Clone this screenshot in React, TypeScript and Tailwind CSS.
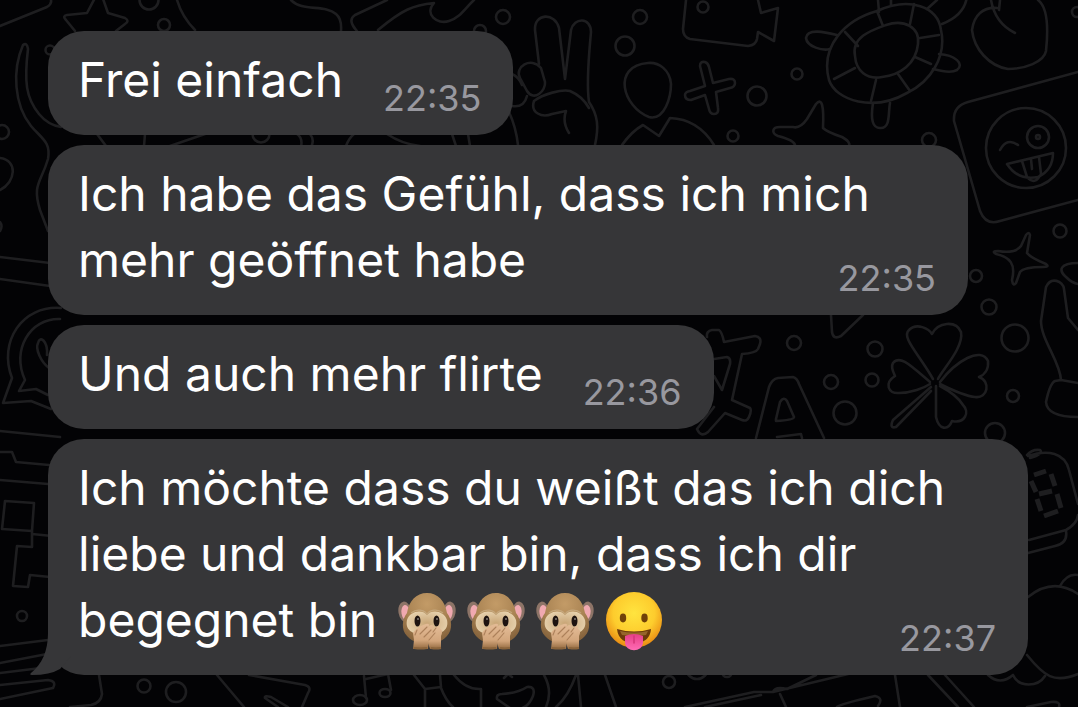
import type { ReactNode } from 'react';

type Message = {
  id: number;
  time: string;
  width: string;
  body: ReactNode;
  multiline?: boolean;
  tail?: boolean;
};

function EmojiGradients() {
  return (
    <svg aria-hidden="true" className="absolute h-0 w-0">
      <defs>
        <radialGradient id="fur" cx="50%" cy="22%" r="80%">
          <stop offset="0" stopColor="#c39b67" />
          <stop offset="0.55" stopColor="#a98353" />
          <stop offset="1" stopColor="#82603a" />
        </radialGradient>
        <radialGradient id="mask" cx="50%" cy="50%" r="60%">
          <stop offset="0" stopColor="#c9a677" />
          <stop offset="1" stopColor="#e9d5b2" />
        </radialGradient>
        <linearGradient id="hand" x1="0" y1="0" x2="0" y2="1">
          <stop offset="0" stopColor="#e3bb96" />
          <stop offset="0.65" stopColor="#d3a67c" />
          <stop offset="1" stopColor="#93693f" />
        </linearGradient>
        <radialGradient id="face" cx="50%" cy="38%" r="62%">
          <stop offset="0" stopColor="#ffe43f" />
          <stop offset="0.6" stopColor="#fdcc2d" />
          <stop offset="1" stopColor="#e98a12" />
        </radialGradient>
        <linearGradient id="tongue" x1="0" y1="0" x2="0" y2="1">
          <stop offset="0" stopColor="#e63f86" />
          <stop offset="1" stopColor="#ff6bb5" />
        </linearGradient>
      </defs>
    </svg>
  );
}

function MonkeyEmoji() {
  return (
    <svg role="img" aria-label="🙊" viewBox="0 0 58 60" className="h-[60px] w-[58px]">
      <ellipse cx="7" cy="21" rx="6.5" ry="10.5" fill="#8d7467" transform="rotate(-10 7 21)" />
      <ellipse cx="51" cy="21" rx="6.5" ry="10.5" fill="#8d7467" transform="rotate(10 51 21)" />
      <ellipse cx="8" cy="22" rx="4.5" ry="8" fill="#f0a9b0" transform="rotate(-10 8 22)" />
      <ellipse cx="50" cy="22" rx="4.5" ry="8" fill="#f0a9b0" transform="rotate(10 50 22)" />
      <path d="M29 2C18 2 11 10 9 22C4 28 3 39 9 45C15 52 22 52 29 52C36 52 43 52 49 45C55 39 54 28 49 22C47 10 40 2 29 2Z" fill="url(#fur)" />
      <path d="M29 24C24 18 12 20 9 29C7 38 13 44 29 44C45 44 51 38 49 29C46 20 34 18 29 24Z" fill="url(#mask)" />
      <path d="M13 22C19 17 26 19 29 23C32 19 39 17 45 22" fill="none" stroke="#cbb089" strokeWidth="1.2" opacity="0.7" />
      <ellipse cx="19.500" cy="30" rx="3" ry="5.6" fill="#1d1310" />
      <ellipse cx="38.500" cy="30" rx="3" ry="5.6" fill="#1d1310" />
      <circle cx="20" cy="28" r="0.9" fill="#8d8580" />
      <circle cx="39" cy="28" r="0.9" fill="#8d8580" />
      <path d="M43 58H32L29 49L33 40L38 36C41 34 43 36 42 38C44 38 45 41 43 45V50Z" fill="url(#hand)" />
      <path d="M15 58L16 49L15 42C17 38 24 34 28 33C31 32 32 34 30 36L33 34C37 34 36 37 34 39C38 37 39 40 37 42L31 49L30 58Z" fill="url(#hand)" />
      <path d="M29 36L22 43M33 39L26 46M19 39L17 44M37 42L31 49M38 37L35 41" stroke="#a27650" strokeWidth="1.1" strokeLinecap="round" opacity="0.8" />
      <path d="M16 57Q23 58 29 57M33 57Q38 58 43 57" fill="none" stroke="#8a643c" strokeWidth="2" />
    </svg>
  );
}

function TongueEmoji() {
  return (
    <svg role="img" aria-label="😛" viewBox="0 0 58 60" className="h-[60px] w-[58px]">
      <circle cx="29" cy="29" r="28" fill="url(#face)" />
      <ellipse cx="18" cy="27" rx="3.2" ry="4.4" fill="#704109" />
      <ellipse cx="39.5" cy="27" rx="3.2" ry="4.4" fill="#704109" />
      <path d="M12 38Q29 43 46 38C45 50 36 52 29 52C21 52 13 49 12 38Z" fill="#6c3a0b" />
      <path d="M15 40Q29 43 43 40L41 44Q29 46 17 44Z" fill="#96652a" />
      <path d="M20 45Q29 41 38 45V51C38 62 20 62 20 51Z" fill="url(#tongue)" />
      <path d="M29 45V52" stroke="#d43579" strokeWidth="1.5" strokeLinecap="round" />
    </svg>
  );
}

const dots: [number, number, number][] = [
  [503, 17, 7], [640, 17, 7], [625, 46, 9.5], [703, 7, 5.5], [757, 96, 9.5], [733, 136, 5.5],
  [797, 74, 5.5], [929, 140, 7], [1077, 12, 5], [1060, 231, 6.5], [976, 276, 6], [989, 307, 7.5],
  [1015, 338, 13.5], [1013, 396, 6], [995, 433, 10], [794, 343, 7], [875, 349, 7.5], [831, 382, 7],
  [872, 380, 6.5], [845, 413, 11.5], [164, 25, 6], [149, 0, 9.5], [50, 50, 4.5], [2, 132, 7],
  [22, 616, 5], [144, 686, 6.5], [176, 692, 10], [669, 682, 6], [697, 668, 11], [727, 672, 5],
  [480, 31, 6], [261, 134, 8.5],
];

function Doodles() {
  return (
    <svg
      aria-hidden="true"
      viewBox="0 0 1078 707"
      preserveAspectRatio="xMinYMin slice"
      className="absolute inset-0 h-full w-full"
      fill="none"
      stroke="#1e1e20"
      strokeWidth="2.6"
      strokeLinecap="round"
      strokeLinejoin="round"
    >
      {dots.map(([x, y, r]) => (
        <circle key={`${x}-${y}`} cx={x} cy={y} r={r} />
      ))}
      {/* top left */}
      <path d="M0 26L47 7Q52 4 51 0" />
      <path d="M96 -4L87 13L67 15Q62 16 66 20L75 31M102 -4L108 13L125 18Q130 21 125 24L116 31" />
      <path d="M177 0Q182 17 195 30" />
      <path d="M291 0C302 12 325 4 336 14Q342 19 341 31" />
      <path d="M387 0L355 15Q347 20 357 31M378 30C402 10 413 5 434 3C424 14 437 25 449 21C461 17 465 8 474 0" />
      <path d="M23 45C12 70 14 105 31 126C42 139 51 142 48 159C41 183 32 184 40 210L48 231M23 45Q27 42 28 49C24 82 26 98 39 114Q48 125 61 127" />
      <path d="M0 158C18 160 16 182 0 190M0 222Q3 226 0 231M0 257L50 263M0 279L50 286" />
      <path d="M97 134L106 146M145 134L144 146M205 134L170 146M297 134Q303 138 301 147M310 134Q315 140 311 147M354 134Q349 138 346 146M387 134Q402 144 420 146M452 134L456 146M468 134L470 146" />
      {/* victory hand */}
      <path d="M539 64L535 30C534 13 555 12 559 28L565 79L571 30C574 17 591 17 591 32C589 55 586 82 589 102C598 115 599 127 595 145" />
      <path d="M541 68C531 56 514 67 520 78L527 91C534 102 546 91 545 82Z" />
      <path d="M534 101C543 94 562 89 570 91C577 94 584 99 589 108M534 101C530 113 542 118 552 114L566 111Q562 122 569 133M512 74Q519 77 522 85M512 106Q524 108 527 96M509 112Q516 127 518 145" />
      {/* figure, plus sign and camera */}
      <path d="M648 63C611 66 623 107 649 117C665 121 671 96 671 84C670 70 659 62 648 63ZM622 145Q632 131 643 125L659 136L670 118Q698 119 714 145" />
      <path d="M700 66Q700 61 705 62Q708 63 709 67L713 83L729 79Q735 78 735 83Q735 87 730 88L716 92L718 108Q719 114 714 114Q710 114 709 109L705 95L691 100Q685 100 685 95Q685 92 690 91L705 86Z" />
      <path d="M686 0L683 29Q683 37 690 39L748 46Q756 45 757 39L758 32L774 41L778 8L761 13L758 0" />
      {/* turtle and star */}
      <path d="M829 80C820 46 845 20 877 11C910 -4 938 7 941 30C947 57 930 82 907 93C874 112 836 101 829 80Z" />
      <path d="M855 56C851 37 872 30 886 25C904 19 920 27 918 44C916 64 900 75 882 77C867 80 856 71 855 56ZM845 32L858 46M877 11L883 26M914 4L910 24M939 35L920 38M931 64L915 57M910 91L898 74M871 101L876 80M834 79L855 68" />
      <path d="M837 35C825 32 807 28 806 38C807 47 823 51 830 49M939 54C955 55 965 64 957 70C950 74 937 70 933 69M873 103Q869 128 880 128C891 129 888 112 890 103M879 12L878 0M891 5V0M927 9L937 0M942 24Q965 15 967 -4" />
      <path d="M780 127H793Q800 129 807 119L816 104C822 97 824 106 823 128Q827 132 842 137Q851 142 849 146M780 127C772 127 771 133 778 136Q794 140 795 145" />
      {/* fruit and winking card */}
      <path d="M997 8C983 7 974 15 972 30C974 49 989 66 1008 69C1025 69 1044 62 1046 51C1049 23 1046 6 1038 0M991 0Q995 23 1015 33M1000 0L999 10" />
      <path d="M1078 72L968 102Q953 106 954 121L980 211Q986 226 1000 221L1078 200" />
      <circle cx="1026" cy="148" r="40" />
      <circle cx="1038" cy="137" r="11" />
      <circle cx="1038" cy="137" r="2" />
      <path d="M1000 150Q1007 137 1018 145M1007 164L1053 153Q1053 170 1038 177Q1018 181 1007 164ZM1022 161L1027 177Q1035 186 1041 174L1039 157M1031 159L1032 169" />
      {/* sparkle and raised hand */}
      <path d="M1026 235Q1029 231 1030 235L1027 253Q1031 258 1046 264Q1050 267 1043 267Q1024 267 1020 272L1016 283Q1013 287 1012 280C1016 264 1010 257 996 254Q991 251 998 251Q1015 254 1021 246Z" />
      <path d="M1061 380C1060 361 1041 340 1041 321L1046 287C1051 276 1063 281 1064 289L1068 318L1078 330M1061 380L1055 381Q1050 383 1046 402Q1047 417 1078 417M1061 380L1078 383M1078 263C1060 263 1058 270 1066 277Q1072 283 1078 284" />
      {/* letters and corner */}
      <path d="M707 337Q706 331 712 330L719 330Q722 332 724 342L755 336Q762 337 760 344L758 349Q756 353 742 354L732 400L750 408Q752 410 749 417Q747 422 742 420L725 413L708 432Q701 438 697 429L714 407M714 359L727 357Q731 358 730 364L722 390L714 376M831 315L832 332Q833 340 841 336L863 315" />
      <path d="M756 438L769 387Q772 379 778 378L793 377Q797 378 799 384L824 438M776 419L780 402Q784 396 787 401L794 417Q794 420 776 421ZM777 437L801 434L802 438" />
      {/* clover */}
      <path d="M933 379C918 353 901 337 909 330C917 322 929 329 932 334C938 322 956 320 961 332C964 347 943 369 938 379M930 382C909 364 900 355 893 363C890 368 895 375 895 376C884 383 888 394 899 393C911 393 924 388 930 384M940 382C956 361 981 346 988 361C989 370 984 375 979 377C991 381 988 399 975 397C964 396 950 389 940 384M936 386V417C939 430 948 431 952 421C965 424 970 412 963 405Q957 395 940 386M931 387L893 420Q889 429 896 427L931 391" />
      {/* left chat logo and blocks */}
      <path d="M61 308C22 305 -2 342 12 378L3 403L31 401L51 409M60 319C30 318 11 350 25 380L19 391L36 389L48 395M47 355C48 341 40 335 38 343C35 349 41 362 49 368" />
      <path d="M0 431L60 437M0 452H12L16 462L60 466M0 480L60 485M5 501L34 503L32 531L2 529ZM32 531V547L17 546L13 586L28 587L30 575L50 577M32 534L52 536M0 646L48 640M0 663L47 654M0 673L41 668M0 685L48 680Q57 681 53 688L0 699" />
      {/* bottom edge */}
      <path d="M99 675L102 694Q101 703 91 705L70 707M217 675L244 707M249 675L305 685Q312 687 308 693L302 707M278 707L265 698Q264 695 271 697L288 707" />
      <path d="M364 676L366 698M366 679L388 674L391 690" />
      <ellipse cx="360" cy="700" rx="7" ry="5" />
      <ellipse cx="385" cy="693" rx="5.5" ry="4" />
      <path d="M414 675L425 689L441 687L440 675M425 690V707M441 688Q446 701 453 707M454 675Q466 690 481 689V707M504 678L508 674L512 677M497 699Q496 694 502 694Q518 693 527 687Q536 686 533 696Q526 713 510 708Z" />
      <path d="M544 675Q553 691 546 707M576 675Q568 697 556 707M578 675L581 707M605 675L616 707M685 707L754 692L773 692L848 674M705 707L761 695M773 692Q775 686 787 689L816 675M780 694L786 707M895 675L900 707M928 675L958 707M945 675L974 707M837 707Q840 704 875 696Q884 698 878 706M1027 707L1051 702Q1061 701 1059 707" />
      {/* digital watch and cloud */}
      <path d="M1027 455Q1032 449 1040 450Q1044 454 1030 458M1028 456C1048 449 1065 453 1069 470L1078 504M1029 540L1066 530Q1077 524 1078 515M1066 531Q1068 543 1055 546L1028 553M1028 597Q1053 577 1078 594M1060 586Q1067 573 1078 575M1027 655C1044 676 1054 684 1078 674M988 675Q1000 686 1013 675C1019 688 1038 687 1045 676" />
      <path d="M1034 475L1046 471M1051 474L1055 486M1031 481L1036 492M1039 494L1052 491M1057 494L1061 508M1037 499L1041 511M1044 516L1058 511" strokeWidth="5" strokeLinecap="butt" />
    </svg>
  );
}

const messages: Message[] = [
  { id: 1, time: '22:35', width: 'w-fit', body: 'Frei einfach' },
  {
    id: 2,
    time: '22:35',
    width: 'w-full max-w-[920px]',
    multiline: true,
    body: 'Ich habe das Gefühl, dass ich mich mehr geöffnet habe',
  },
  { id: 3, time: '22:36', width: 'w-fit', body: 'Und auch mehr flirte' },
  {
    id: 4,
    time: '22:37',
    width: 'w-full max-w-[980px]',
    multiline: true,
    tail: true,
    body: (
      <>
        Ich möchte dass du weißt das ich dich liebe und dankbar bin, dass ich dir begegnet bin{' '}
        <span className="ml-[7px] inline-flex gap-[11px] align-[-14px]">
          <MonkeyEmoji />
          <MonkeyEmoji />
          <MonkeyEmoji />
          <TongueEmoji />
        </span>
      </>
    ),
  },
];

function Bubble({ message }: { message: Message }) {
  const { time, width, body, multiline, tail } = message;
  return (
    <li className={`relative rounded-[36px] bg-[#363638] pt-4 pr-8 pb-[22px] pl-[30px] ${width}`}>
      {tail && (
        <svg aria-hidden="true" viewBox="0 0 50 60" className="absolute bottom-0 -left-[18px] h-[60px] w-[50px]">
          <path d="M18 0V18C18 36 12 49 1 58Q-1 60 2 60Q20 60 30 54L42 40V0Z" fill="#363638" />
        </svg>
      )}
      {multiline ? (
        <p className="relative flow-root leading-[66px]">
          {body}
          <time dateTime={time} className="float-right mt-9 text-[36px] leading-[30px] text-[#98989f]">
            {time}
          </time>
        </p>
      ) : (
        <p className="flex gap-10 leading-[66px] whitespace-nowrap">
          <span>{body}</span>
          <time dateTime={time} className="self-end text-[36px] leading-[30px] text-[#98989f]">
            {time}
          </time>
        </p>
      )}
    </li>
  );
}

export default function App() {
  return (
    <main className="relative min-h-screen overflow-hidden bg-[#030305] font-['Inter','Noto_Sans',sans-serif] text-[48px] text-white">
      <Doodles />
      <EmojiGradients />
      <ul className="relative flex flex-col gap-[10px] pt-[31px] pr-[50px] pb-8 pl-12">
        {messages.map((message) => (
          <Bubble key={message.id} message={message} />
        ))}
      </ul>
    </main>
  );
}
